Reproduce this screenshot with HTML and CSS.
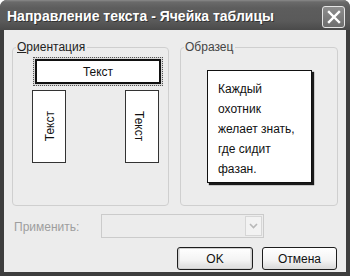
FILE: index.html
```html
<!DOCTYPE html>
<html lang="ru">
<head>
<meta charset="utf-8">
<title>Направление текста</title>
<link rel="stylesheet" href="styles.css">
</head>
<body>
<div class="window">
  <div class="titlebar">
    <span class="title">Направление текста - Ячейка таблицы</span>
    <button class="close" aria-label="Закрыть">
      <svg width="14" height="14" viewBox="0 0 14 14"><path d="M2 2 L12 12 M12 2 L2 12" stroke="#fff" stroke-width="2.4" stroke-linecap="square"/></svg>
    </button>
  </div>
  <div class="frame">
    <div class="groups">
      <fieldset class="group orient">
        <legend><u>О</u>риентация</legend>
        <div class="hbox"><div class="hbox-inner">Текст</div></div>
        <div class="vrow">
          <div class="vbox"><span class="vt up">Текст</span></div>
          <div class="vbox"><span class="vt down">Текст</span></div>
        </div>
      </fieldset>
      <fieldset class="group sample">
        <legend>Образец</legend>
        <div class="sample-box">
          <div>Каждый</div>
          <div>охотник</div>
          <div>желает знать,</div>
          <div>где сидит</div>
          <div>фазан.</div>
        </div>
      </fieldset>
    </div>
    <div class="apply-row">
      <span class="apply-label">Применить:</span>
      <div class="combo">
        <div class="combo-btn">
          <svg width="9" height="6" viewBox="0 0 9 6"><path d="M1 1 L4.5 4.5 L8 1" fill="none" stroke="#b8b8b8" stroke-width="1.6"/></svg>
        </div>
      </div>
    </div>
    <div class="buttons">
      <button class="btn default">OK</button>
      <button class="btn">Отмена</button>
    </div>
  </div>
</div>
</body>
</html>
```
FILE: styles.css
```css
html, body {
  margin: 0;
  padding: 0;
  background: #fff;
}
body {
  font-family: "Liberation Sans", Arial, sans-serif;
  font-size: 12px;
  color: #111;
}
.window {
  width: 350px;
  height: 276px;
  display: flex;
  flex-direction: column;
  background: #3d3d3d;
  border-radius: 7px 7px 0 0;
  overflow: hidden;
}
.titlebar {
  height: 30px;
  flex: none;
  display: flex;
  align-items: center;
  justify-content: space-between;
  padding: 0 5px 0 7px;
  box-sizing: border-box;
  background: linear-gradient(#8a8a8a 0, #6a6a6a 2px, #5d5d5d 8px, #5a5a5a 70%, #4a4a4a 100%);
}
.title {
  color: #fff;
  font-weight: bold;
  font-size: 14px;
  letter-spacing: 0;
  margin-top: 2px;
  text-shadow: 1px 1px 0 #333;
}
.close {
  width: 23px;
  height: 22px;
  margin-top: 3px;
  padding: 0;
  border: 1px solid #e6e6e6;
  border-radius: 3px;
  background: linear-gradient(#8e8e8e, #6e6e6e);
  display: flex;
  align-items: center;
  justify-content: center;
}
.frame {
  flex: 1;
  background: #ececec;
  border: 4px solid #3d3d3d;
  border-top: 0;
  padding: 11px 8px 2px 8px;
  display: flex;
  flex-direction: column;
}
.groups {
  display: flex;
  gap: 11px;
  height: 165px;
}
.group {
  margin: 0;
  padding: 0;
  border: 1px solid #cfcfcf;
  border-radius: 4px;
  min-width: 0;
}
.orient { width: 157px; box-sizing: border-box; }
.sample { width: 158px; box-sizing: border-box; }
legend {
  font-size: 12px;
  line-height: 13px;
  padding: 0 2px 0 1px;
  margin-left: 3px;
  color: #222;
}
.sample legend { color: #444; }
.hbox {
  margin: 3px 0 0 20px;
  width: 130px;
  height: 29px;
  box-sizing: border-box;
  border: 1px dotted #555;
  padding: 1px;
  background: #d8d8d8;
}
.hbox-inner {
  height: 100%;
  box-sizing: border-box;
  border: 2px solid #111;
  background: #fff;
  display: flex;
  align-items: center;
  justify-content: center;
}
.vrow {
  margin: 4px 0 0 19px;
  width: 127px;
  display: flex;
  justify-content: space-between;
}
.vbox {
  width: 34px;
  height: 73px;
  box-sizing: border-box;
  border: 1px solid #333;
  background: #fff;
  display: flex;
  align-items: center;
  justify-content: center;
}
.vt {
  writing-mode: vertical-rl;
  line-height: 14px;
}
.vt.up { transform: rotate(180deg); margin-left: 2px; }
.vt.down { margin-right: 6px; }
.sample-box {
  margin: 16px 0 0 26px;
  width: 105px;
  height: 113px;
  box-sizing: border-box;
  border: 1px solid #111;
  background: #fff;
  box-shadow: 2px 2px 1px #1a1a1a;
  padding: 8px 0 0 10px;
  line-height: 20px;
  font-size: 12px;
}
.apply-row {
  margin-top: 8px;
  display: flex;
  align-items: center;
  height: 24px;
}
.apply-label {
  width: 87px;
  padding-left: 2px;
  color: #9e9e9e;
  margin-top: 1px;
}
.combo {
  width: 163px;
  height: 24px;
  box-sizing: border-box;
  border: 1px solid #cbcbcb;
  background: #ececec;
  display: flex;
  justify-content: flex-end;
  padding: 1px;
}
.combo-btn {
  width: 17px;
  box-sizing: border-box;
  border: 1px solid #d6d6d6;
  background: #f2f2f2;
  display: flex;
  align-items: center;
  justify-content: center;
}
.buttons {
  margin-top: 9px;
  display: flex;
  justify-content: flex-end;
  gap: 9px;
  padding-right: 1px;
}
.btn {
  height: 23px;
  width: 75px;
  box-sizing: border-box;
  border: 1px solid #1e1e1e;
  border-radius: 3px;
  background: linear-gradient(#ffffff, #f3f3f3 60%, #d9d9d9);
  font-family: "Liberation Sans", Arial, sans-serif;
  font-size: 12px;
  color: #111;
  padding: 0;
}
.btn.default {
  width: 76px;
  box-shadow: inset 0 0 0 1px #d0d0d0, inset 0 -1px 0 2px #e2e2e2;
}
```
